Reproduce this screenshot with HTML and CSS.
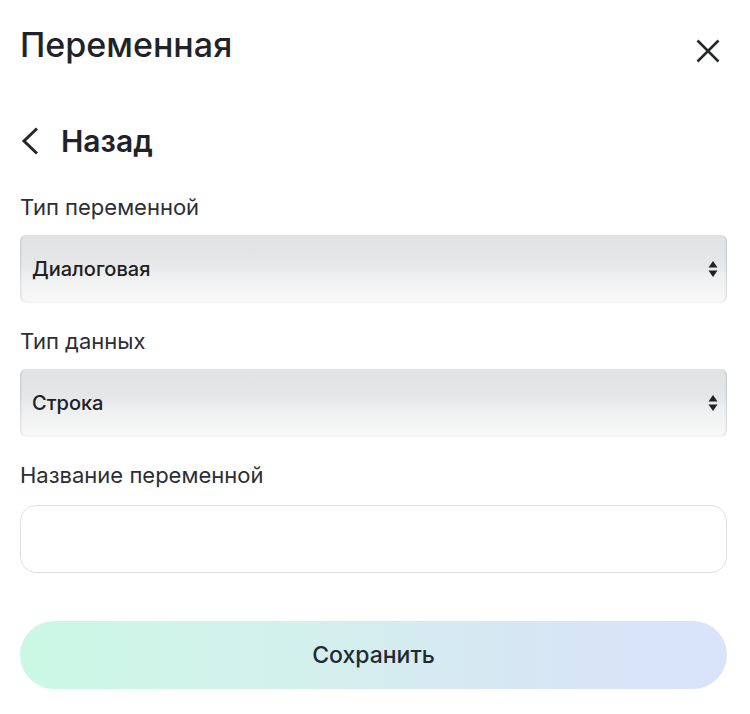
FILE: index.html
```html
<!DOCTYPE html>
<html lang="ru">
<head>
    <meta charset="UTF-8">
    <meta name="viewport" content="width=device-width, initial-scale=1.0">
    <title>Переменная</title>
    <link rel="stylesheet" href="styles.css">
</head>
<body>

<div class="panel">
    <div class="panel-header">
        <h1>Переменная</h1>
        <button class="close-btn" aria-label="Закрыть">
            <svg width="24" height="24" viewBox="0 0 24 24"><path d="M1.5 1.5 L22.5 22.5 M22.5 1.5 L1.5 22.5" stroke="#24272c" stroke-width="2.5" fill="none"/></svg>
        </button>
    </div>

    <a class="back-link" href="#">
        <svg width="18" height="28" viewBox="0 0 18 28"><path d="M16 1.5 L3 14 L16 26.5" stroke="#24272c" stroke-width="3" fill="none"/></svg>
        <span>Назад</span>
    </a>

    <div class="field">
        <label>Тип переменной</label>
        <div class="select-box">
            <span>Диалоговая</span>
            <svg class="arrows" width="10" height="18" viewBox="0 0 10 18"><path d="M5 1 L9.5 7.5 L0.5 7.5 Z M5 17 L9.5 10.5 L0.5 10.5 Z" fill="#222"/></svg>
        </div>
    </div>

    <div class="field">
        <label>Тип данных</label>
        <div class="select-box">
            <span>Строка</span>
            <svg class="arrows" width="10" height="18" viewBox="0 0 10 18"><path d="M5 1 L9.5 7.5 L0.5 7.5 Z M5 17 L9.5 10.5 L0.5 10.5 Z" fill="#222"/></svg>
        </div>
    </div>

    <div class="field field-last">
        <label>Название переменной</label>
        <input type="text" class="text-input">
    </div>

    <button class="save-btn">Сохранить</button>
</div>

</body>
</html>
```

FILE: styles.css
```css
body {
    font-family: Inter, 'Liberation Sans', Arial, sans-serif;
    background-color: #fff;
    margin: 0;
    padding: 0;
    color: #1f2329;
}
.panel {
    padding: 25px 23px 0 20px;
}
.panel-header {
    display: flex;
    justify-content: space-between;
    align-items: center;
    height: 40px;
}
.panel-header h1 {
    margin: 0;
    font-size: 34px;
    line-height: 40px;
    font-weight: 500;
}
.close-btn {
    background: none;
    border: none;
    padding: 0;
    margin-right: 7px;
    margin-top: 12px;
    cursor: pointer;
    display: flex;
}
.back-link {
    display: flex;
    align-items: center;
    gap: 22px;
    margin-top: 56px;
    height: 40px;
    color: #1f2329;
    text-decoration: none;
    font-size: 30px;
    font-weight: 600;
}
.back-link svg {
    margin-left: 1px;
}
.field {
    margin-top: 27px;
}
.back-link + .field {
    margin-top: 34px;
}
.field label {
    display: block;
    font-size: 22px;
    line-height: 24px;
    color: #2b2e33;
    margin-bottom: 16px;
}
.field-last label {
    margin-bottom: 18px;
}
.select-box {
    display: flex;
    align-items: center;
    justify-content: space-between;
    height: 67px;
    padding: 0 9px 0 12px;
    border-radius: 6px;
    background: linear-gradient(#e1e2e4 0%, #e6e7e9 45%, #eff0f1 62%, #f8f8f8 100%);
    box-shadow: inset 2px 0 2px -1px rgba(0, 0, 0, 0.12), inset -2px 0 2px -1px rgba(0, 0, 0, 0.12), 0 1px 1px rgba(0, 0, 0, 0.05);
    font-size: 20px;
    font-weight: 500;
    color: #1e2024;
}
.text-input {
    display: block;
    width: 100%;
    height: 68px;
    box-sizing: border-box;
    border: 1px solid #dedfe1;
    border-radius: 16px;
    background-color: #fff;
    font-size: 18px;
    padding: 0 14px;
}
.text-input:focus {
    outline: none;
}
.save-btn {
    display: block;
    width: 100%;
    height: 68px;
    margin-top: 48px;
    border: none;
    border-radius: 34px;
    background: linear-gradient(90deg, #cbf8e5 0%, #d3f0ec 40%, #d6e7f3 70%, #d9e3fb 100%);
    font-family: Inter, 'Liberation Sans', Arial, sans-serif;
    font-size: 23px;
    font-weight: 500;
    color: #1f2a33;
    cursor: pointer;
}
```
